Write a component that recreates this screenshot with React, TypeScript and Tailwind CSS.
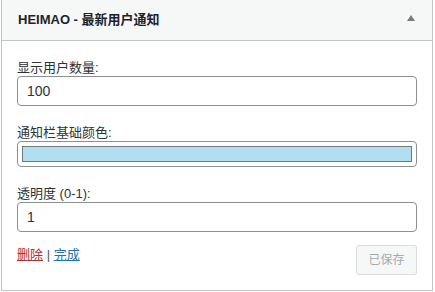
import React from "react";

const font = { fontFamily: '"Liberation Sans", "Noto Sans CJK SC", sans-serif' };

export default function App() {
  return (
    <div className="w-[435px] h-[292px] bg-white" style={font}>
      <div className="ml-[1px] w-[432px] h-[291px] border-x border-b border-[#c3c4c7] bg-white flex flex-col">
        <div className="h-[41px] shrink-0 bg-[#f6f7f7] border-b border-[#c3c4c7] flex items-center justify-between pl-[16px] pr-[17px]">
          <span className="text-[13px] font-semibold text-[#1d2327]">HEIMAO - 最新用户通知</span>
          <svg width="8" height="6" viewBox="0 0 8 6" className="mt-[-4px]">
            <polygon points="4,0 8,6 0,6" fill="#787c82" />
          </svg>
        </div>
        <div className="px-[15px] pt-[19px] pb-[15px] flex flex-col text-[#2c3338]">
          <label className="text-[13px] leading-[16px] h-[16px]">显示用户数量:</label>
          <div className="h-[30px] border border-[#8c8f94] rounded-[4px] flex items-center pl-[9px] text-[14px] text-[#2c3338]">
            100
          </div>
          <label className="mt-[19px] text-[13px] leading-[16px] h-[16px]">通知栏基础颜色:</label>
          <div className="h-[26px] border border-[#8c8f94] rounded-[4px] flex items-center px-[4px]">
            <div className="w-full h-[16px] border border-[#767676] bg-[#b0dff1]" />
          </div>
          <label className="mt-[19px] text-[13px] leading-[16px] h-[16px]">透明度 (0-1):</label>
          <div className="h-[30px] border border-[#8c8f94] rounded-[4px] flex items-center pl-[9px] text-[14px] text-[#2c3338]">
            1
          </div>
          <div className="mt-[13px] flex items-start justify-between">
            <div className="text-[13px] leading-[18px] mt-[1px]">
              <a className="text-[#b32d2e] underline">删除</a>
              <span className="text-[#50575e]"> | </span>
              <a className="text-[#2271b1] underline">完成</a>
            </div>
            <div className="w-[61px] h-[30px] border border-[#dcdcde] rounded-[3px] bg-[#f6f7f7] text-[#a7aaad] text-[12px] flex items-center justify-center">
              已保存
            </div>
          </div>
        </div>
      </div>
    </div>
  );
}
